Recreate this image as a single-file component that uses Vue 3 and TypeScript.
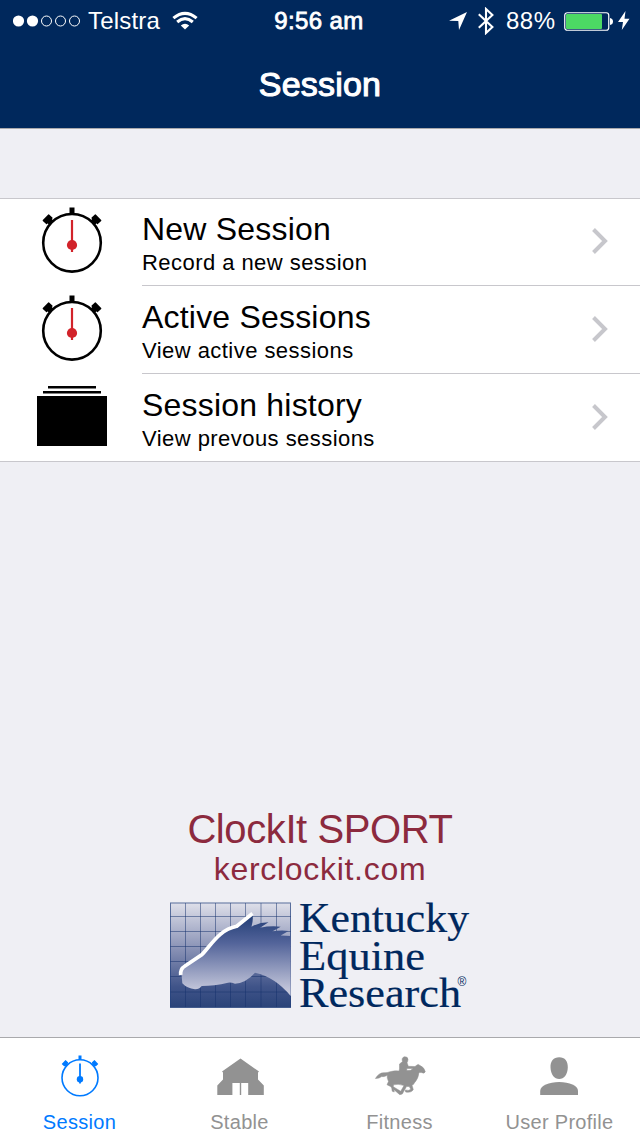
<script setup lang="ts">
import { ref } from 'vue';

interface Row {
  title: string;
  detail: string;
  icon: 'watch' | 'history';
}

const rows: Row[] = [
  { title: 'New Session', detail: 'Record a new session', icon: 'watch' },
  { title: 'Active Sessions', detail: 'View active sessions', icon: 'watch' },
  { title: 'Session history', detail: 'View prevous sessions', icon: 'history' },
];

const tabs = ['Session', 'Stable', 'Fitness', 'User Profile'];
const activeTab = ref('Session');
</script>

<template>
  <div class="screen">
    <header class="header">
      <div class="status">
        <div class="carrier">
          <svg class="signal" width="68" height="12" viewBox="0 0 68 12">
            <circle cx="5.5" cy="6" r="5.6" fill="#fff" />
            <circle cx="19.5" cy="6" r="5.6" fill="#fff" />
            <g fill="none" stroke="#fff">
              <circle cx="33.5" cy="6" r="5" />
              <circle cx="47.5" cy="6" r="5" />
              <circle cx="61.5" cy="6" r="5" />
            </g>
          </svg>
          <span class="carrier-name">Telstra</span>
          <svg class="wifi" width="26" height="20" viewBox="0 0 26 20">
            <path d="M13 18.5 L8.8 14.4 Q13 11 17.2 14.4 Z" fill="#fff" />
            <path d="M5.2 11 Q13 4.4 20.8 11" fill="none" stroke="#fff" stroke-width="3.1" />
            <path d="M1.4 7.1 Q13 -2.4 24.6 7.1" fill="none" stroke="#fff" stroke-width="3.1" />
          </svg>
        </div>
        <div class="time">9:56 am</div>
        <div class="indicators">
          <svg width="18" height="18" viewBox="0 0 18 18">
            <path d="M0 8.8 L18 0 L10 18 L9.3 9 Z" fill="#fff" />
          </svg>
          <svg class="bluetooth" width="16" height="28" viewBox="0 0 16 28">
            <path d="M.8 7.2 L14.4 20 L8 26 V2 L14.4 8 L.8 20.8" fill="none" stroke="#fff" stroke-width="2.1" />
          </svg>
          <span class="percent">88%</span>
          <svg class="battery" width="50" height="20" viewBox="0 0 50 20">
            <rect x=".75" y=".75" width="44" height="17.5" rx="2.5" fill="none" stroke="#fff" stroke-width="1.2" />
            <rect x="2" y="2" width="36" height="15" rx="1" fill="#4cd964" />
            <path d="M46 6 Q49 6.5 49 9.5 Q49 12.5 46 13 Z" fill="#fff" />
          </svg>
          <svg class="bolt" width="12" height="20" viewBox="0 0 12 20">
            <path d="M7.5 0 L0 11 H5 L3.8 19 L11.5 7.8 H6.5 Z" fill="#fff" />
          </svg>
        </div>
      </div>
      <h1 class="title">Session</h1>
    </header>

    <main class="content">
      <ul class="list">
        <li v-for="row in rows" :key="row.title" class="row">
          <div class="row-icon">
            <svg v-if="row.icon === 'watch'" width="72" height="72" viewBox="0 -1 72 72">
              <g fill="#000">
                <rect x="33.5" y="3.5" width="5" height="8" />
                <g transform="rotate(-46 36 38.8)">
                  <rect x="31.5" y="2" width="9" height="5.8" rx=".6" />
                  <rect x="33" y="7" width="6" height="4" />
                </g>
                <g transform="rotate(46 36 38.8)">
                  <rect x="31.5" y="2" width="9" height="5.8" rx=".6" />
                  <rect x="33" y="7" width="6" height="4" />
                </g>
              </g>
              <circle cx="36" cy="38.8" r="28.8" fill="#fff" stroke="#000" stroke-width="2.6" />
              <path d="M36 16 V48" stroke="#d2232a" stroke-width="2.2" />
              <circle cx="36" cy="41" r="5.1" fill="#d2232a" />
            </svg>
            <svg v-else width="72" height="72" viewBox="0 0 72 72">
              <path d="M12 7.1 h48 v2.5 h-48z M7 12 h58 v2.6 h-58z M1 17 h70 v50 h-70z" fill="#000" />
            </svg>
          </div>
          <div class="row-body">
            <div class="row-text">
              <div class="row-title">{{ row.title }}</div>
              <div class="row-detail">{{ row.detail }}</div>
            </div>
            <svg class="chevron" width="18" height="28" viewBox="0 0 18 28">
              <path d="M2.5 2.5 L14 14 L2.5 25.5" fill="none" stroke="#c7c7cc" stroke-width="4" />
            </svg>
          </div>
        </li>
      </ul>

      <div class="brand">
        <div class="product">ClockIt SPORT</div>
        <div class="site">kerclockit.com</div>
        <svg class="logo" width="300" height="110" viewBox="0 0 300 110">
          <defs>
            <linearGradient id="sky" x1="0" y1="0" x2="0" y2="1">
              <stop offset="0" stop-color="#dfe0ea" />
              <stop offset=".45" stop-color="#8790b4" />
              <stop offset=".8" stop-color="#405489" />
              <stop offset="1" stop-color="#2a4379" />
            </linearGradient>
            <linearGradient id="horse" gradientUnits="userSpaceOnUse" x1="0" y1="12" x2="0" y2="95">
              <stop offset="0" stop-color="#1f3b74" />
              <stop offset=".35" stop-color="#53649a" />
              <stop offset=".9" stop-color="#c0c3d8" />
              <stop offset="1" stop-color="#cfd1e1" />
            </linearGradient>
          </defs>
          <rect x="0" y=".5" width="121" height="105" fill="url(#sky)" />
          <g stroke="#142f6b" stroke-opacity=".5" fill="none">
            <path d="M15.5 1 V105 M30.5 1 V105 M45.5 1 V105 M60.5 1 V105 M75.5 1 V105 M91 1 V105 M106.5 1 V105" />
            <path d="M0 14.5 H121 M0 29.5 H121 M0 44.5 H121 M0 59.5 H121 M0 74.5 H121 M0 90 H121" />
          </g>
          <rect x=".5" y="1" width="120" height="104.5" fill="none" stroke="#24427d" stroke-opacity=".7" />
          <path
            d="M11.5 72 Q12 66 17 63 L34 52 Q47 35 57 29 Q63 26 67 24.5 L82.5 12 Q83.5 18 81.5 24.7 Q89 20.5 98.5 20.3 L90 25.7 Q101 23.5 110.7 24.7 L101.7 29.8 Q110 27.8 118.5 29 L110.7 33.5 L120.7 34 V94 Q105 75 85 70.7 Q76 81 65 81.7 Q61 80.2 58 80.7 Q44 84 31.7 84 Q29 87.5 25 87.3 Q17 86.5 12.3 81.3 Z"
            fill="url(#horse)"
          />
          <path
            d="M10.7 73 Q10 67 15 64 L32 52.5 C42 42 49 28 66.7 24.3 L82.5 11.5"
            fill="none" stroke="#fff" stroke-width="3.7"
          />
          <g class="logo-text" fill="#00285e" stroke="#00285e" stroke-width=".2">
            <text x="129" y="30" textLength="170" lengthAdjust="spacingAndGlyphs">Kentucky</text>
            <text x="129" y="67.5" textLength="126" lengthAdjust="spacingAndGlyphs">Equine</text>
            <text x="129" y="105" textLength="162" lengthAdjust="spacingAndGlyphs">Research</text>
          </g>
          <text class="registered" x="287.5" y="84" fill="#00285e">®</text>
        </svg>
      </div>
    </main>

    <nav class="tabs">
      <button
        v-for="tab in tabs"
        :key="tab"
        class="tab"
        :class="{ active: tab === activeTab }"
        @click="activeTab = tab"
      >
        <svg v-if="tab === 'Session'" width="60" height="48" viewBox="0 0 60 48" fill="currentColor">
          <rect x="28.5" y="3.5" width="3" height="5" />
          <g transform="rotate(-46 30 25.8)">
            <rect x="27.2" y="3" width="5.6" height="3.8" rx=".4" />
            <rect x="28.2" y="5" width="3.6" height="3" />
          </g>
          <g transform="rotate(46 30 25.8)">
            <rect x="27.2" y="3" width="5.6" height="3.8" rx=".4" />
            <rect x="28.2" y="5" width="3.6" height="3" />
          </g>
          <circle cx="30" cy="25.8" r="18" fill="#fff" stroke="currentColor" stroke-width="1.6" />
          <path d="M29.1 11.5 h1.8 v20 h-1.8z" />
          <circle cx="30" cy="27.2" r="3.2" />
        </svg>
        <svg v-else-if="tab === 'Stable'" width="60" height="48" viewBox="0 0 60 48" fill="currentColor">
          <path d="M30.5 6.5 L49 19.5 L48 20.5 V27.5 L53.8 33.5 V43 H38.2 V31 H31.2 V43 H29.8 V31 H22.4 V43 H7.3 V33.5 L13 27.5 V20.5 L12 19.5 Z" />
        </svg>
        <svg v-else-if="tab === 'Fitness'" width="60" height="48" viewBox="0 0 60 48">
          <path
            d="M5.4 26.5 Q9 20.5 14 20.7 Q17 21 20 19.7 Q25 18.3 29 19 L29.5 17 L29.5 12 L32.5 9.6 Q31.2 6 34.2 4.8 Q38 4.4 38 7.5 Q37.7 10 37 10.7 L38.3 14.3 L45 14.5 L47 13 Q48 11.6 50 13.5 Q54.3 15.2 55.3 19.8 Q54.5 22 51.5 20.6 L49 20.5 Q48.3 27 44.3 31 Q44 32.5 42 33.3 L43.3 37.5 Q41.5 41 35.6 40 L35.3 38 Q39.5 39.2 40.7 37 L39.2 34.5 L36.5 34.5 L32.3 42 L29.8 42.7 L23.7 37.5 L24.3 40 L22.2 39.2 Q22 36 21 34.7 L17 32.7 L18.5 29.5 Q16.8 26.2 17.2 23.3 Q14.5 25.2 11.7 24.6 Q9 26.7 5.4 26.5 Z M23.5 32.8 L23.3 34.7 L30.7 39.3 L34 33.6 Q28 31.5 23.5 32.8 Z M36.8 16.5 L36.8 18.5 L40.5 18.3 L43.2 16.5 Z"
            fill="currentColor" fill-rule="evenodd" stroke="currentColor" stroke-width=".5"
          />
        </svg>
        <svg v-else width="60" height="48" viewBox="0 0 60 48" fill="currentColor">
          <path d="M29.2 5.2 C35 5.2 38 9 37.8 15.5 C37.6 22.5 34 27 29.2 27 C24.4 27 20.8 22.5 20.5 15.5 C20.3 9 23.5 5.2 29.2 5.2 Z" />
          <path d="M10.2 43 V39 C10.2 33.5 19 30 29.2 30 C39.4 30 48 33.5 48 39 V43 Z" />
        </svg>
        <span class="tab-label">{{ tab }}</span>
      </button>
    </nav>
  </div>
</template>

<style>
body {
  margin: 0;
}
</style>

<style scoped>
.screen {
  width: 640px;
  height: 1136px;
  display: flex;
  flex-direction: column;
  background: #efeff4;
  font-family: "Liberation Sans", Arial, sans-serif;
  overflow: hidden;
}
.screen svg {
  display: block;
  flex: none;
}
.header {
  height: 128px;
  flex: none;
  background: #00285c;
  color: #fff;
  border-bottom: 1px solid #a9a9ac;
}
.status {
  height: 40px;
  display: grid;
  grid-template-columns: 1fr auto 1fr;
  align-items: center;
  padding-top: 1px;
  font-size: 24px;
  line-height: 40px;
}
.carrier {
  display: flex;
  align-items: center;
  padding-left: 13px;
}
.carrier-name {
  margin-left: 7px;
  width: 84px;
  letter-spacing: 0.2px;
}
.time {
  padding-right: 2px;
  letter-spacing: 0.4px;
  -webkit-text-stroke: 0.8px #fff;
}
.indicators {
  display: flex;
  align-items: center;
  justify-content: flex-end;
  padding-right: 10px;
}
.bluetooth {
  margin-left: 11px;
}
.percent {
  margin-left: 12px;
  width: 58px;
  letter-spacing: 0.5px;
}
.battery {
  margin-top: 2px;
}
.bolt {
  margin-left: 4px;
}
.title {
  margin: 0;
  font-size: 34px;
  font-weight: normal;
  line-height: 86px;
  text-align: center;
  letter-spacing: 0.2px;
  -webkit-text-stroke: 1.1px #fff;
}
.content {
  flex: 1;
  display: flex;
  flex-direction: column;
  justify-content: space-between;
  padding-top: 69px;
}
.list {
  margin: 0;
  padding: 0;
  list-style: none;
  background: #fff;
  border-top: 1px solid #c8c7cc;
  border-bottom: 1px solid #c8c7cc;
}
.row {
  height: 88px;
  display: flex;
}
.row:first-child,
.row:last-child {
  height: 87px;
}
.row-icon {
  box-sizing: border-box;
  width: 142px;
  padding: 5px 0 0 36px;
}
.row:first-child .row-icon {
  padding-top: 4px;
}
.row-body {
  flex: 1;
  display: flex;
  align-items: center;
  justify-content: space-between;
  padding-right: 31px;
  border-bottom: 1px solid #c8c7cc;
}
.row:last-child .row-body {
  border-bottom: none;
}
.row-text {
  padding-top: 5px;
}
.row-title {
  font-size: 32px;
  line-height: 36px;
  letter-spacing: 0.2px;
}
.row-detail {
  font-size: 22px;
  line-height: 31px;
  letter-spacing: 0.45px;
}
.chevron {
  margin-bottom: 2px;
}
.brand {
  display: flex;
  flex-direction: column;
  align-items: center;
  color: #8c2a3e;
  padding-bottom: 25px;
}
.product {
  font-size: 40px;
  line-height: 44px;
  letter-spacing: -0.4px;
}
.site {
  font-size: 32px;
  line-height: 36px;
  letter-spacing: 0.7px;
}
.logo {
  margin-top: 15px;
  overflow: visible;
}
.logo-text {
  font-family: "Liberation Serif", "Times New Roman", serif;
  font-size: 43px;
}
.registered {
  font-size: 12px;
}
.tabs {
  height: 98px;
  flex: none;
  display: grid;
  grid-template-columns: repeat(4, 1fr);
  background: #fff;
  border-top: 1px solid #a9a9ac;
}
.tab {
  display: flex;
  flex-direction: column;
  align-items: center;
  border: none;
  background: none;
  padding: 14px 0 0;
  color: #929292;
  font-family: inherit;
  font-size: 20px;
}
.tab.active {
  color: #007aff;
}
.tab-label {
  margin: 10px 1px 0 0;
  line-height: 24px;
  letter-spacing: 0.3px;
}
</style>
